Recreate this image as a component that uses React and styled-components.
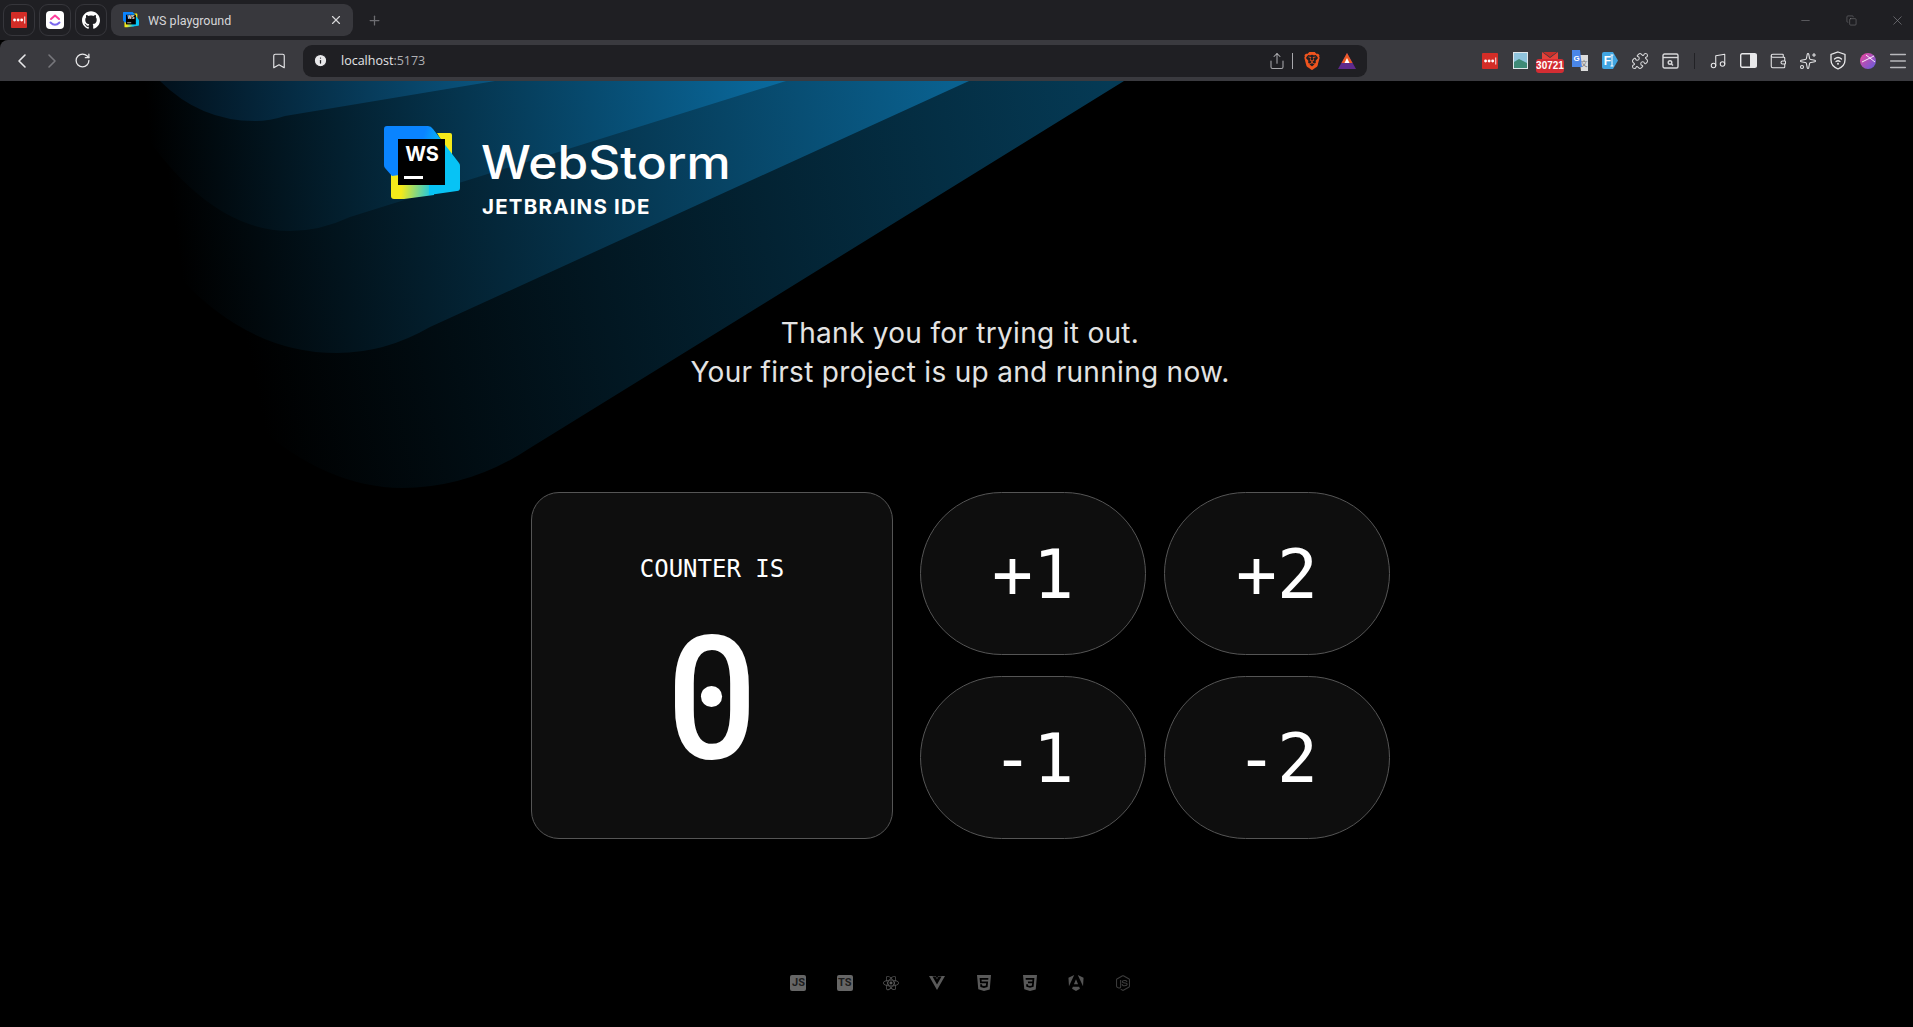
import styled, { createGlobalStyle } from "styled-components";
import { ChevronLeft, ChevronRight, RotateCw, Bookmark, Share, Puzzle, Music, Wallet, Sparkles, Menu, Plus, X, Minus, Copy, Info } from "lucide-react";
import { SiReact, SiVuedotjs, SiHtml5, SiCss3, SiAngular, SiGithub, SiBrave } from "react-icons/si";
import { FaNodeJs } from "react-icons/fa";

const GlobalStyle = createGlobalStyle`
  html, body {
    margin: 0;
    padding: 0;
    background: #000;
    height: 100%;
    overflow: hidden;
  }
  * { box-sizing: border-box; }
`;

const Window = styled.div`
  width: 1913px;
  height: 1027px;
  display: flex;
  flex-direction: column;
  overflow: hidden;
  font-family: "Open Sans", sans-serif;
`;

const TabStrip = styled.div`
  height: 40px;
  background: #1f1f23;
  display: flex;
  align-items: flex-start;
  padding: 4px 0 0 3px;
`;

const PinnedTab = styled.div`
  width: 32px;
  height: 32px;
  margin-right: 4px;
  border: 1px solid #36363b;
  border-radius: 9px;
  display: flex;
  align-items: center;
  justify-content: center;
  color: #fff;
`;

const ActiveTab = styled.div`
  width: 242px;
  height: 32px;
  background: #38383d;
  border-radius: 9px;
  display: flex;
  align-items: center;
  padding: 0 10px 0 12px;
  color: #d6d6d8;
  font-family: Roboto, sans-serif;
  font-size: 12.5px;
  gap: 9px;
`;

const TabTitle = styled.span`
  flex: 1;
`;

const NewTab = styled.div`
  width: 42px;
  height: 32px;
  display: flex;
  align-items: center;
  justify-content: center;
  color: #6d6d72;
`;

const WindowControls = styled.div`
  margin-left: auto;
  margin-right: -7px;
  display: flex;
  height: 32px;
  align-items: center;
  color: #8a8a8e;
`;

const WindowButton = styled.div`
  width: 46px;
  display: flex;
  justify-content: center;
`;

const Toolbar = styled.div`
  height: 41px;
  background: #3a3a3f;
  border-radius: 8px 0 0 0;
  display: flex;
  align-items: center;
  padding-left: 7px;
  color: #e8e8ea;
`;

const ToolCell = styled.div`
  width: 30px;
  height: 30px;
  flex: none;
  display: flex;
  align-items: center;
  justify-content: center;
  color: ${(props) => props.$color || "#e8e8ea"};
  margin-left: ${(props) => props.$offset || 0}px;
`;

const AddressBar = styled.div`
  width: 1064px;
  height: 32px;
  margin-left: 9px;
  background: #1f1f23;
  border-radius: 9px;
  display: flex;
  align-items: center;
  padding-left: 10px;
  padding-right: 5px;
`;

const AddressText = styled.span`
  margin-left: 13px;
  flex: 1;
  font-size: 12.5px;
  color: #e4e4e6;
`;

const Port = styled.span`
  color: #b0b0b4;
`;

const Divider = styled.div`
  width: 1px;
  height: 16px;
  background: ${(props) => props.$color || "#77777c"};
  margin: 0 ${(props) => props.$space || 0}px;
`;

const Extensions = styled.div`
  margin-left: auto;
  display: flex;
  align-items: center;
`;

const Page = styled.main`
  position: relative;
  flex: 1;
  background: #000;
  padding-top: 45px;
  overflow: hidden;
`;

const Backdrop = styled.svg`
  position: absolute;
  left: 0;
  top: 0;
`;

const Content = styled.div`
  position: relative;
  display: flex;
  flex-direction: column;
`;

const Brand = styled.div`
  display: flex;
  gap: 21px;
  margin-left: 384px;
  height: 188px;
`;

const BrandText = styled.div`
  padding-top: 13px;
  color: #fff;
  font-family: Inter, sans-serif;
`;

const BrandName = styled.div`
  font-size: 46px;
  line-height: 46px;
  font-weight: 500;
  transform: scaleX(1.08);
  transform-origin: left center;
`;

const BrandSub = styled.div`
  margin: 10px 0 0 1px;
  font-size: 20.5px;
  line-height: 24px;
  font-weight: 700;
  letter-spacing: 1.2px;
`;

const Tagline = styled.p`
  margin: 0;
  padding-left: 7px;
  text-align: center;
  font-family: Inter, sans-serif;
  font-size: 28px;
  line-height: 39px;
  font-weight: 400;
  letter-spacing: 0.3px;
  color: #e3e3e3;
`;

const Panel = styled.section`
  margin: 100px 0 0 531px;
  display: flex;
  gap: 27px;
`;

const CounterCard = styled.div`
  width: 362px;
  height: 347px;
  background: #0e0e0e;
  border: 1px solid #555;
  border-radius: 28px;
  color: #fff;
  display: flex;
  flex-direction: column;
  align-items: center;
`;

const CounterLabel = styled.div`
  margin-top: 62px;
  font-family: "DejaVu Sans Mono", monospace;
  font-size: 24px;
  line-height: 28px;
`;

const CounterValue = styled.div`
  position: relative;
  font-family: Roboto, sans-serif;
  font-weight: 500;
  font-size: 172px;
  line-height: 200px;
  margin-top: 16px;
  transform: scaleX(0.92);

  &::after {
    content: "";
    position: absolute;
    left: 50%;
    top: 87px;
    width: 23px;
    height: 21px;
    margin-left: -11.5px;
    border-radius: 50%;
    background: #fff;
  }
`;

const ButtonGrid = styled.div`
  display: grid;
  grid-template-columns: 226px 226px;
  grid-template-rows: 163px 163px;
  column-gap: 18px;
  row-gap: 21px;
`;

const CountButton = styled.button`
  background: #0e0e0e;
  border: 1px solid #555;
  border-radius: 82px;
  color: #fff;
  font-family: "DejaVu Sans Mono", monospace;
  font-size: 68px;
  line-height: 1;
  padding: 3px 0 0;
  cursor: pointer;
`;

const TechRow = styled.div`
  margin-top: 136px;
  display: flex;
  justify-content: center;
  gap: 30.3px;
  padding-left: 8px;
`;

const TechIcon = styled.div`
  width: 16px;
  height: 16px;
  font-size: 16px;
  line-height: 0;
  color: ${(props) => props.$color};
`;

const TechBadge = styled.div`
  width: 16px;
  height: 16px;
  border-radius: 2px;
  background: #666;
  color: #1c1c1c;
  font-family: Roboto, sans-serif;
  font-size: 11px;
  font-weight: 700;
  line-height: 16px;
  text-align: center;
`;

const LastPass = ({ size = 18 }) => (
  <svg width={size} height={size} viewBox="0 0 18 18">
    <rect width="18" height="18" rx="1" fill="#d32d27" />
    <circle cx="4" cy="9" r="1.6" fill="#fff" />
    <circle cx="8" cy="9" r="1.6" fill="#fff" />
    <circle cx="12" cy="9" r="1.6" fill="#fff" />
    <rect x="15" y="5" width="1" height="8" fill="#fff" />
  </svg>
);

const ClickUp = () => (
  <svg width="18" height="18" viewBox="0 0 18 18">
    <rect width="18" height="18" rx="4" fill="#fff" />
    <path d="M5 8 L9 4.5 L13 8" fill="none" stroke="#ff3f9e" strokeWidth="2" strokeLinecap="round" strokeLinejoin="round" />
    <path d="M4.5 11.5 Q9 16 13.5 11.5" fill="none" stroke="#7b68ee" strokeWidth="2" strokeLinecap="round" />
  </svg>
);

const WsLogo = ({ size = 76 }) => (
  <svg width={size} height={size * 73 / 76} viewBox="0 0 76 73">
    <defs>
      <linearGradient id="wsBlue" x1="0" y1="20" x2="70" y2="45" gradientUnits="userSpaceOnUse">
        <stop offset="0.45" stopColor="#0a84ff" />
        <stop offset="0.75" stopColor="#07c3f5" />
      </linearGradient>
      <linearGradient id="wsYellow" x1="14" y1="62" x2="50" y2="66" gradientUnits="userSpaceOnUse">
        <stop offset="0.1" stopColor="#f4ea1a" />
        <stop offset="1" stopColor="#07c3f5" />
      </linearGradient>
    </defs>
    <path d="M53 7 L66 7 Q68 7 68 9 L68 32 Z" fill="#f4ea1a" />
    <path d="M7 46 L7 70 Q7 73 10 73 L20 73 L50 69 L50 40 Z" fill="url(#wsYellow)" />
    <path d="M3 0 L44 0 Q47 0 49 3 L75 37 Q76 38 76 40 L76 62 Q76 65 73 65 L45 69 L45 45 L8 50 L1 42 Q0 41 0 39 L0 3 Q0 0 3 0 Z" fill="url(#wsBlue)" />
    <rect x="14" y="13" width="47" height="46" fill="#000" />
    <text x="38" y="35" textAnchor="middle" fontFamily="Inter, sans-serif" fontWeight="700" fontSize="20" fill="#fff">WS</text>
    <rect x="20" y="50" width="19" height="3" fill="#fff" />
  </svg>
);

const PictureIcon = () => (
  <svg width="15" height="17" viewBox="0 0 15 17">
    <rect width="15" height="17" fill="#dfe6ea" />
    <rect x="1" y="1" width="13" height="15" fill="#8fc4dd" />
    <path d="M1 10 L6 7 L14 11 L14 16 L1 16 Z" fill="#3f8a77" />
  </svg>
);

const MailBadge = styled.div`
  position: relative;
  width: 30px;
  height: 30px;
  display: flex;
  justify-content: center;
`;

const BadgeCount = styled.span`
  position: absolute;
  left: 1px;
  top: 13px;
  width: 28px;
  height: 14px;
  border-radius: 3px;
  background: #d32d33;
  color: #fff;
  font-family: "Liberation Sans", sans-serif;
  font-size: 10px;
  font-weight: 700;
  line-height: 14px;
  text-align: center;
`;

const MailIcon = () => (
  <svg width="16" height="8" viewBox="0 0 16 8" style={{ marginTop: 6 }}>
    <path d="M0 0 L8 6 L16 0 L16 8 L0 8 Z" fill="#e4423a" />
    <path d="M1 0 L15 0 L8 5 Z" fill="#c4302b" />
  </svg>
);

const TranslateIcon = () => (
  <svg width="17" height="22" viewBox="0 0 17 22">
    <path d="M7 5 L16 5 L16 21 L9 21 Z" fill="#dcdcdc" />
    <text x="12" y="16" textAnchor="middle" fontSize="7" fontFamily="Liberation Sans, Noto Sans CJK SC" fill="#777">文</text>
    <path d="M0 0 L8 0 L10 17 L0 17 Z" fill="#4a86e8" />
    <text x="4.6" y="11" textAnchor="middle" fontSize="8" fontWeight="700" fontFamily="Liberation Sans" fill="#fff">G</text>
  </svg>
);

const FontIcon = () => (
  <svg width="16" height="17" viewBox="0 0 16 17">
    <path d="M2 0 L11 0 L16 8.5 L11 17 L2 17 Q0 17 0 15 L0 2 Q0 0 2 0 Z" fill="#41a5e1" />
    <text x="5.5" y="13" textAnchor="middle" fontSize="12" fontWeight="700" fontFamily="Liberation Sans" fill="#fff">F</text>
    <path d="M10 3 L10 14 M8.5 3 L11.5 3 M8.5 14 L11.5 14" stroke="#fff" strokeWidth="1" />
  </svg>
);

const ReaderIcon = () => (
  <svg width="17" height="16" viewBox="0 0 17 16" fill="none" stroke="#d8d8da" strokeWidth="1.4">
    <rect x="1" y="1" width="15" height="14" rx="1.5" />
    <path d="M1 4.5 L16 4.5" />
    <circle cx="8" cy="9.5" r="1.8" />
    <path d="M9.5 11 L11 12.5" />
  </svg>
);

const PanelIcon = () => (
  <svg width="17" height="15" viewBox="0 0 17 15">
    <rect x="0.7" y="0.7" width="15.6" height="13.6" rx="1.5" fill="none" stroke="#e8e8ea" strokeWidth="1.4" />
    <rect x="10" y="1" width="6.5" height="13" fill="#e8e8ea" />
  </svg>
);

const VpnIcon = () => (
  <svg width="16" height="19" viewBox="0 0 16 19" fill="none" stroke="#e8e8ea" strokeWidth="1.3" strokeLinecap="round">
    <path d="M8 1 L15 3.5 L15 9 Q15 15 8 18 Q1 15 1 9 L1 3.5 Z" />
    <path d="M4.5 8 Q8 5 11.5 8" />
    <path d="M6 10.5 Q8 9 10 10.5" />
    <circle cx="8" cy="12.8" r="0.4" />
  </svg>
);

const ProfileIcon = () => (
  <svg width="16" height="16" viewBox="0 0 16 16">
    <defs>
      <linearGradient id="profileFill" x1="0" y1="0" x2="1" y2="1">
        <stop offset="0" stopColor="#f0459a" />
        <stop offset="1" stopColor="#5f5de0" />
      </linearGradient>
    </defs>
    <circle cx="8" cy="8" r="8" fill="url(#profileFill)" />
    <path d="M2 9 L14 3 M6 2 L15 9" stroke="#fff" strokeWidth="0.9" />
  </svg>
);

const BatIcon = () => (
  <svg width="18" height="16" viewBox="0 0 18 16">
    <path d="M9 0 L18 16 L0 16 Z" fill="#5f2a8c" />
    <path d="M9 0 L14.5 10 L3.5 10 Z" fill="#ee5a24" />
    <path d="M9 5 L11.5 10 L6.5 10 Z" fill="#fff" />
  </svg>
);

const techIcons = [
  { Icon: SiReact, color: "#5a5a5a" },
  { Icon: SiVuedotjs, color: "#5a5a5a" },
  { Icon: SiHtml5, color: "#5a5a5a" },
  { Icon: SiCss3, color: "#5a5a5a" },
  { Icon: SiAngular, color: "#555" },
  { Icon: FaNodeJs, color: "#3c3c3c" },
];

const App = () => {
  return (
    <Window>
      <GlobalStyle />
      <TabStrip>
        <PinnedTab><LastPass size={16} /></PinnedTab>
        <PinnedTab><ClickUp /></PinnedTab>
        <PinnedTab><SiGithub size={18} /></PinnedTab>
        <ActiveTab>
          <WsLogo size={16} />
          <TabTitle>WS playground</TabTitle>
          <X size={14} strokeWidth={2} color="#d6d6d8" />
        </ActiveTab>
        <NewTab><Plus size={15} /></NewTab>
        <WindowControls>
          <WindowButton><Minus size={13} strokeWidth={1} /></WindowButton>
          <WindowButton><Copy size={11} strokeWidth={1} /></WindowButton>
          <WindowButton><X size={15} strokeWidth={1} /></WindowButton>
        </WindowControls>
      </TabStrip>
      <Toolbar>
        <ToolCell><ChevronLeft size={24} strokeWidth={1.6} /></ToolCell>
        <ToolCell $color="#77777c"><ChevronRight size={24} strokeWidth={1.6} /></ToolCell>
        <ToolCell><RotateCw size={17} strokeWidth={1.8} /></ToolCell>
        <ToolCell $offset={167}><Bookmark size={18} strokeWidth={1.5} /></ToolCell>
        <AddressBar>
          <Info size={15} fill="#e8e8ea" color="#1f1f23" strokeWidth={2} />
          <AddressText>localhost<Port>:5173</Port></AddressText>
          <ToolCell $color="#a8a8ac"><Share size={18} strokeWidth={1.4} /></ToolCell>
          <Divider $color="#a8a8ac" />
          <ToolCell $offset={4}><SiBrave size={18} color="#f0541e" /></ToolCell>
          <ToolCell $offset={5}><BatIcon /></ToolCell>
        </AddressBar>
        <Extensions>
          <ToolCell><LastPass size={16} /></ToolCell>
          <ToolCell><PictureIcon /></ToolCell>
          <MailBadge><MailIcon /><BadgeCount>30721</BadgeCount></MailBadge>
          <ToolCell><TranslateIcon /></ToolCell>
          <ToolCell><FontIcon /></ToolCell>
          <ToolCell $color="#d8d8da"><Puzzle size={18} strokeWidth={1.4} /></ToolCell>
          <ToolCell><ReaderIcon /></ToolCell>
          <Divider $color="#222226" $space={9} />
          <ToolCell $offset={-1}><Music size={18} strokeWidth={1.4} /></ToolCell>
          <ToolCell><PanelIcon /></ToolCell>
          <ToolCell><Wallet size={18} strokeWidth={1.4} /></ToolCell>
          <ToolCell><Sparkles size={18} strokeWidth={1.4} /></ToolCell>
          <ToolCell><VpnIcon /></ToolCell>
          <ToolCell><ProfileIcon /></ToolCell>
          <ToolCell><Menu size={22} strokeWidth={1.6} color="#b8b8bc" /></ToolCell>
        </Extensions>
      </Toolbar>
      <Page>
        <Backdrop width="1200" height="520" viewBox="0 0 1200 520">
          <defs>
            <linearGradient id="band3" x1="230" y1="180" x2="1110" y2="0" gradientUnits="userSpaceOnUse">
              <stop offset="0" stopColor="#000" />
              <stop offset="1" stopColor="#053a55" />
            </linearGradient>
            <linearGradient id="band2" x1="170" y1="110" x2="960" y2="0" gradientUnits="userSpaceOnUse">
              <stop offset="0" stopColor="#000" />
              <stop offset="1" stopColor="#0a6291" />
            </linearGradient>
            <linearGradient id="band1" x1="150" y1="60" x2="780" y2="0" gradientUnits="userSpaceOnUse">
              <stop offset="0" stopColor="#000" />
              <stop offset="1" stopColor="#0a6a9e" />
            </linearGradient>
            <linearGradient id="band0" x1="170" y1="20" x2="490" y2="0" gradientUnits="userSpaceOnUse">
              <stop offset="0" stopColor="#02121e" />
              <stop offset="1" stopColor="#0a5580" />
            </linearGradient>
          </defs>
          <path d="M1124 0 L530 367 Q470 407 402 407 Q320 407 240 330 L100 150 L100 0 Z" fill="url(#band3)" />
          <path d="M969 0 L430 246 Q385 272 337 272 Q250 272 180 197 L90 80 L90 0 Z" fill="url(#band2)" />
          <path d="M786 0 L350 136 Q320 150 290 150 Q210 150 140 47 L110 0 Z" fill="url(#band1)" />
          <path d="M495 0 L285 35 Q270 40 255 40 Q200 40 160 0 Z" fill="url(#band0)" />
        </Backdrop>
        <Content>
          <Brand>
            <WsLogo />
            <BrandText>
              <BrandName>WebStorm</BrandName>
              <BrandSub>JETBRAINS IDE</BrandSub>
            </BrandText>
          </Brand>
          <Tagline>
            Thank you for trying it out.<br />
            Your first project is up and running now.
          </Tagline>
          <Panel>
            <CounterCard>
              <CounterLabel>COUNTER IS</CounterLabel>
              <CounterValue>0</CounterValue>
            </CounterCard>
            <ButtonGrid>
              <CountButton>+1</CountButton>
              <CountButton>+2</CountButton>
              <CountButton>-1</CountButton>
              <CountButton>-2</CountButton>
            </ButtonGrid>
          </Panel>
          <TechRow>
            <TechBadge>JS</TechBadge>
            <TechBadge>TS</TechBadge>
            {techIcons.map(({ Icon, color }, i) => (
              <TechIcon key={i} $color={color}><Icon size={16} /></TechIcon>
            ))}
          </TechRow>
        </Content>
      </Page>
    </Window>
  );
};

export default App;
